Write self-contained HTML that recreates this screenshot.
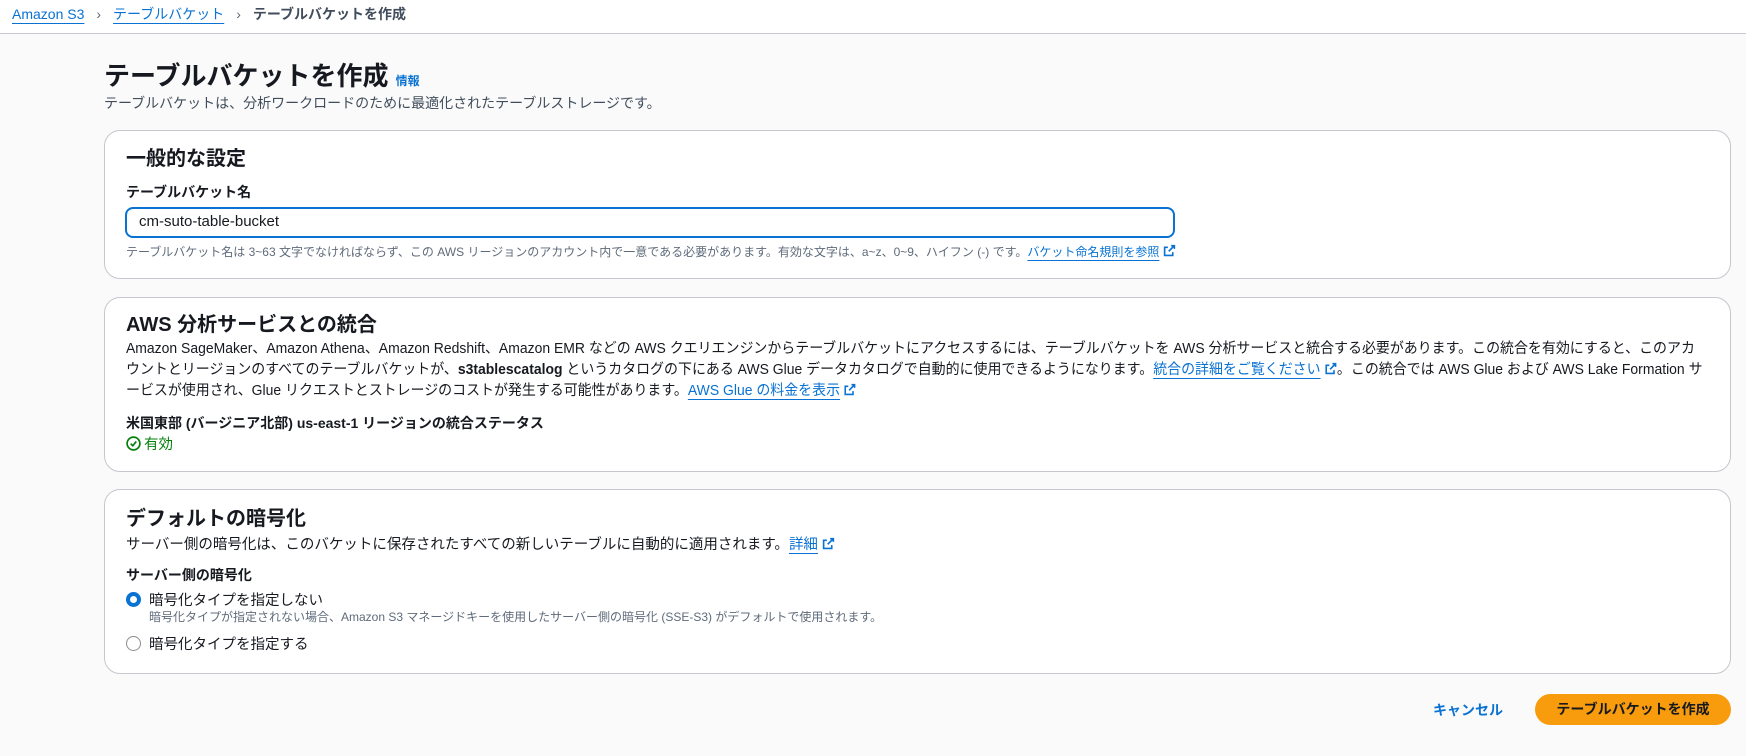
<!DOCTYPE html>
<html><head><meta charset="utf-8"><style>
*{box-sizing:border-box;margin:0;padding:0}
body{width:1746px;height:756px;overflow:hidden;background:#fafafa;font-family:"Liberation Sans","Noto Sans CJK JP",sans-serif;color:#16191f;position:relative}
.a{position:absolute;white-space:nowrap}
.hdr{position:absolute;left:0;top:0;width:1746px;height:34px;background:#fff;border-bottom:1px solid #c6c6cd}
.lnk{color:#0972d3;text-decoration:underline;text-underline-offset:4px}
.card{position:absolute;left:104px;width:1627px;background:#fff;border:1px solid #c6c6cd;border-radius:16px}
.h2{font-size:20px;font-weight:bold}
.ln{font-size:14.5px;color:#16191f;transform:scaleX(0.962);transform-origin:0 0}
.ext{display:inline-block;width:13px;height:13px;vertical-align:-1px;margin-left:4px}
</style></head><body>
<div class="hdr"></div>
<div class="a" style="left:12px;top:4px;font-size:14px;"><span class="lnk">Amazon S3</span><span style="color:#5f6b7a;margin:0 12px">›</span><span class="lnk">テーブルバケット</span><span style="color:#5f6b7a;margin:0 12px">›</span><span style="color:#414d5c;font-weight:bold">テーブルバケットを作成</span></div>

<div class="a" style="left:104px;top:56px;font-size:26px;font-weight:bold">テーブルバケットを作成 <span style="font-size:12px;color:#0972d3;font-weight:bold">情報</span></div>
<div class="a" style="left:104px;top:93px;font-size:14px;color:#414d5c">テーブルバケットは、分析ワークロードのために最適化されたテーブルストレージです。</div>

<div class="card" style="top:130px;height:149px"></div>
<div class="a h2" style="left:126px;top:142px">一般的な設定</div>
<div class="a" style="left:126px;top:182px;font-size:14px;font-weight:bold">テーブルバケット名</div>
<div class="a" style="left:125px;top:207px;width:1050px;height:31px;border:2px solid #0972d3;border-radius:8px;background:#fff"></div>
<div class="a" style="left:139px;top:213px;font-size:15px">cm-suto-table-bucket</div>
<div class="a" style="left:126px;top:243px;font-size:12px;color:#5f6b7a">テーブルバケット名は 3~63 文字でなければならず、この AWS リージョンのアカウント内で一意である必要があります。有効な文字は、a~z、0~9、ハイフン (-) です。<span class="lnk">バケット命名規則を参照</span><svg class="ext" viewBox="0 0 16 16"><path d="M10 2h4v4M14 2L7 9M12 10v4H2V4h4" fill="none" stroke="#0972d3" stroke-width="2"/></svg></div>

<div class="card" style="top:297px;height:175px"></div>
<div class="a h2" style="left:126px;top:308px">AWS 分析サービスとの統合</div>
<div class="a ln" style="left:126px;top:337px">Amazon SageMaker、Amazon Athena、Amazon Redshift、Amazon EMR などの AWS クエリエンジンからテーブルバケットにアクセスするには、テーブルバケットを AWS 分析サービスと統合する必要があります。この統合を有効にすると、このアカ</div>
<div class="a ln" style="left:126px;top:358px">ウントとリージョンのすべてのテーブルバケットが、<b>s3tablescatalog</b> というカタログの下にある AWS Glue データカタログで自動的に使用できるようになります。<span class="lnk">統合の詳細をご覧ください</span><svg class="ext" viewBox="0 0 16 16"><path d="M10 2h4v4M14 2L7 9M12 10v4H2V4h4" fill="none" stroke="#0972d3" stroke-width="2"/></svg>。この統合では AWS Glue および AWS Lake Formation サ</div>
<div class="a ln" style="left:126px;top:379px">ービスが使用され、Glue リクエストとストレージのコストが発生する可能性があります。<span class="lnk">AWS Glue の料金を表示</span><svg class="ext" viewBox="0 0 16 16"><path d="M10 2h4v4M14 2L7 9M12 10v4H2V4h4" fill="none" stroke="#0972d3" stroke-width="2"/></svg></div>
<div class="a" style="left:126px;top:413px;font-size:14px;font-weight:bold">米国東部 (バージニア北部) us-east-1 リージョンの統合ステータス</div>
<div class="a" style="left:126px;top:433px;font-size:14.5px;color:#037f0c"><svg width="15" height="15" viewBox="0 0 16 16" style="vertical-align:-2px;margin-right:3px"><circle cx="8" cy="8" r="6.8" fill="none" stroke="#037f0c" stroke-width="1.8"/><path d="M5 8.2l2.2 2.2L11 5.8" fill="none" stroke="#037f0c" stroke-width="1.8"/></svg>有効</div>

<div class="card" style="top:489px;height:185px"></div>
<div class="a h2" style="left:126px;top:502px">デフォルトの暗号化</div>
<div class="a" style="left:126px;top:533px;font-size:14.5px">サーバー側の暗号化は、このバケットに保存されたすべての新しいテーブルに自動的に適用されます。<span class="lnk">詳細</span><svg class="ext" viewBox="0 0 16 16"><path d="M10 2h4v4M14 2L7 9M12 10v4H2V4h4" fill="none" stroke="#0972d3" stroke-width="2"/></svg></div>
<div class="a" style="left:126px;top:565px;font-size:14px;font-weight:bold">サーバー側の暗号化</div>
<div class="a" style="left:126px;top:592px;width:15px;height:15px;border-radius:50%;border:4px solid #0972d3;background:#fff"></div>
<div class="a" style="left:149px;top:589px;font-size:14.5px">暗号化タイプを指定しない</div>
<div class="a" style="left:149px;top:608px;font-size:12px;color:#5f6b7a">暗号化タイプが指定されない場合、Amazon S3 マネージドキーを使用したサーバー側の暗号化 (SSE-S3) がデフォルトで使用されます。</div>
<div class="a" style="left:126px;top:636px;width:15px;height:15px;border-radius:50%;border:1.5px solid #8c8c94;background:#fff"></div>
<div class="a" style="left:149px;top:633px;font-size:14.5px">暗号化タイプを指定する</div>

<div class="a" style="left:1433px;top:700px;font-size:14px;font-weight:bold;color:#0972d3">キャンセル</div>
<div class="a" style="left:1535px;top:694px;width:196px;height:31px;border-radius:16px;background:#f89c0e;font-size:14px;font-weight:bold;text-align:center;line-height:31px">テーブルバケットを作成</div>
</body></html>
